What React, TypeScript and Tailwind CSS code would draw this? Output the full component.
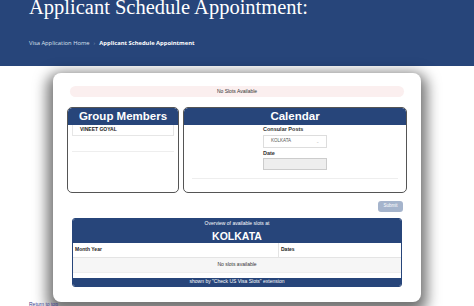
import React from 'react'

const sans = { fontFamily: '"Liberation Sans", Arial, sans-serif' }

const BoxHeader = ({ title }: { title: string }) => (
  <div className="h-[17px] bg-[#27457a] rounded-t-[4px] flex items-center justify-center text-white font-bold text-[11.5px] leading-none">
    {title}
  </div>
)

export default function App() {
  return (
    <div className="w-[474px] h-[306px] overflow-hidden bg-white relative" style={sans}>
      {/* Page header */}
      <div className="h-[66px] bg-[#27457a] pl-[29px] overflow-hidden">
        <h1
          className="text-white text-[20.5px] leading-none -mt-[3px] whitespace-nowrap"
          style={{ fontFamily: '"Liberation Serif", serif' }}
        >
          Applicant Schedule Appointment:
        </h1>
        <div className="mt-[20px] flex items-center gap-[4px] text-[5.8px] leading-[10px] text-[#dbe2ee] whitespace-nowrap" style={{ fontFamily: '"Open Sans", sans-serif' }}>
          <span>Visa Application Home</span>
          <span className="text-[#7d8fb3]">›</span>
          <span className="font-bold text-white">Applicant Schedule Appointment</span>
        </div>
      </div>

      {/* Modal card */}
      <div className="mx-auto mt-[7px] w-[368px] h-[229px] bg-white rounded-[8px] shadow-[0_6px_14px_6px_rgba(0,0,0,0.55)] pt-[13px] px-[14px]">
        <div className="mx-[3px] h-[11px] rounded-full bg-[#fbefef] flex items-center justify-center text-[5px] text-[#333]">
          No Slots Available
        </div>

        <div className="mt-[10px] flex gap-[4px]">
          <div className="w-[112px] h-[86px] border border-[#555] rounded-[5px] overflow-hidden">
            <BoxHeader title="Group Members" />
            <div className="px-[4px]">
              <div className="h-[11px] border border-t-0 border-[#e6e6e6] pl-[7px] flex items-center text-[5px] font-bold text-[#222]">
                VINEET GOYAL
              </div>
              <div className="mt-[15px] border-t border-[#eee]" />
            </div>
          </div>
          <div className="w-[224px] h-[86px] border border-[#555] rounded-[5px] overflow-hidden">
            <BoxHeader title="Calendar" />
            <div className="pl-[79px] pt-[1px]">
              <div className="text-[5.5px] font-bold text-[#333] leading-[7px]">Consular Posts</div>
              <div className="mt-[2px] w-[64px] h-[13px] border border-[#ddd] bg-white flex items-center justify-between px-[7px] text-[4.5px] text-[#555]">
                <span>KOLKATA</span>
                <span className="text-[#bbb] text-[4px]">⌄</span>
              </div>
              <div className="mt-[2px] text-[5.5px] font-bold text-[#333] leading-[7px]">Date</div>
              <div className="mt-[1px] w-[64px] h-[12px] border border-[#ccc] bg-[#eee]" />
            </div>
            <div className="mx-[8px] mt-[8px] border-t border-[#eee]" />
          </div>
        </div>

        <div className="mt-[8px] flex justify-end pr-[4px]">
          <div className="w-[25px] h-[11px] rounded-[3px] bg-[#a5b4cc] text-white text-[4.5px] flex items-center justify-center">
            Submit
          </div>
        </div>

        <div className="mt-[6px] mx-[5px] h-[69px] border border-[#27457a] rounded-[3px] overflow-hidden flex flex-col">
          <div className="h-[24px] bg-[#27457a] text-white flex flex-col items-center">
            <div className="text-[5px] leading-none mt-[2px]">Overview of available slots at</div>
            <div className="text-[10.5px] font-bold leading-none mt-[5px]">KOLKATA</div>
          </div>
          <div className="flex h-[15px] border-b border-[#e4e4e4] text-[5px] font-bold text-[#222]">
            <div className="w-[206px] pl-[2px] flex items-center border-r border-[#e4e4e4]">Month Year</div>
            <div className="pl-[2px] flex items-center">Dates</div>
          </div>
          <div className="h-[15px] bg-[#f6f6f6] border-b border-[#eee] flex items-center justify-center text-[5px] text-[#333]">
            No slots available
          </div>
          <div className="flex-1" />
          <div className="h-[8px] bg-[#27457a] text-white text-[5px] flex items-center justify-center">
            shown by "Check US Visa Slots" extension
          </div>
        </div>
      </div>

      <div className="absolute left-[29px] top-[301px] text-[5px] text-[#3a3a8c] underline">Return to top</div>
    </div>
  )
}
